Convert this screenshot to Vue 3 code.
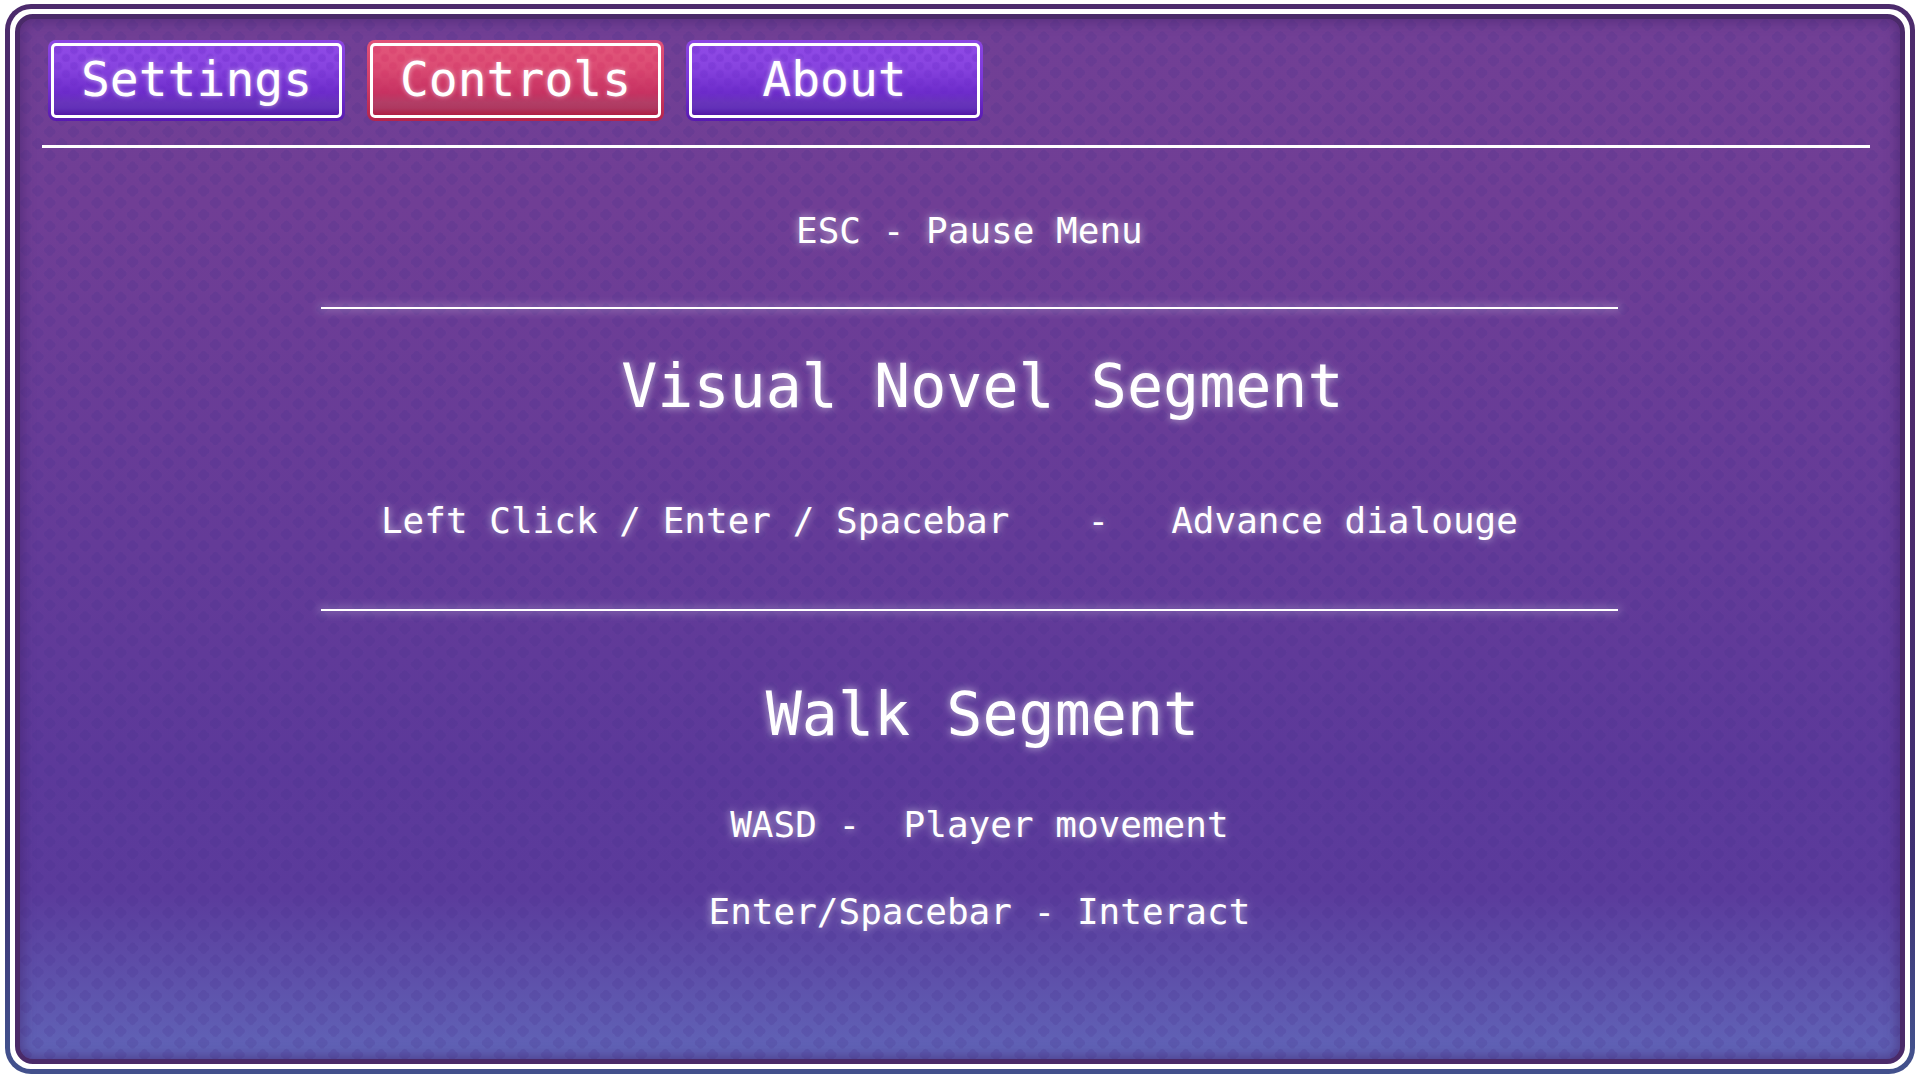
<script setup>
import { ref } from 'vue'

const tabs = ['Settings', 'Controls', 'About']
const active = ref('Controls')
</script>

<template>
  <div class="screen">
    <div class="edge">
      <div class="rim">
        <div class="panel">
          <nav class="tabs">
            <button
              v-for="tab in tabs"
              :key="tab"
              type="button"
              class="tab"
              :class="{ active: tab === active }"
              @click="active = tab"
            >
              <span class="face">{{ tab }}</span>
            </button>
          </nav>
          <hr class="divider" />
          <main class="content">
            <p class="line">ESC - Pause Menu</p>
            <hr class="rule" />
            <section class="novel">
              <h2>Visual Novel Segment</h2>
              <p class="line pair">
                <span>Left Click / Enter / Spacebar</span>
                <span class="dash">-</span>
                <span>Advance dialouge</span>
              </p>
            </section>
            <hr class="rule" />
            <section class="walk">
              <h2>Walk Segment</h2>
              <p class="line">WASD -&nbsp; Player movement</p>
              <p class="line">Enter/Spacebar - Interact</p>
            </section>
          </main>
        </div>
      </div>
    </div>
  </div>
</template>

<style>
body {
  background: #fff;
}
</style>

<style scoped>
.screen {
  box-sizing: border-box;
  display: flex;
  min-height: 100vh;
  padding: 4px 5px 6px;
  font-family: "Lucida Console", "DejaVu Sans Mono", monospace;
  color: #fff;
}

.edge,
.rim,
.panel {
  display: flex;
  flex: 1;
  min-width: 0;
}

.edge {
  padding: 5px;
  border-radius: 26px;
  background: linear-gradient(#4c2b6c 0%, #4b2a6b 45%, #3d3072 80%, #42508c 98%);
}

.rim {
  padding: 5px;
  border-radius: 21px;
  background: #fff;
}

.panel {
  flex-direction: column;
  border: 5px solid #4a2a69;
  border-radius: 18px;
  background:
    url("data:image/svg+xml,%3Csvg xmlns='http://www.w3.org/2000/svg' width='71' height='71' viewBox='0 0 6 6'%3E%3Cdefs%3E%3Cpath id='d' d='M0-.5Q.2-.5 .28-.28Q.5-.2 .5 0Q.5 .2 .28 .28Q.2 .5 0 .5Q-.2 .5-.28 .28Q-.5 .2-.5 0Q-.5-.2-.28-.28Q-.2-.5 0-.5Z'/%3E%3C/defs%3E%3Cg fill='%23402d8c' fill-opacity='.18'%3E%3Cuse href='%23d' x='.5' y='.5'/%3E%3Cuse href='%23d' x='2.5' y='.5'/%3E%3Cuse href='%23d' x='4.5' y='.5'/%3E%3Cuse href='%23d' x='1.5' y='1.5'/%3E%3Cuse href='%23d' x='3.5' y='1.5'/%3E%3Cuse href='%23d' x='5.5' y='1.5'/%3E%3Cuse href='%23d' x='.5' y='2.5'/%3E%3Cuse href='%23d' x='2.5' y='2.5'/%3E%3Cuse href='%23d' x='4.5' y='2.5'/%3E%3Cuse href='%23d' x='1.5' y='3.5'/%3E%3Cuse href='%23d' x='3.5' y='3.5'/%3E%3Cuse href='%23d' x='5.5' y='3.5'/%3E%3Cuse href='%23d' x='.5' y='4.5'/%3E%3Cuse href='%23d' x='2.5' y='4.5'/%3E%3Cuse href='%23d' x='4.5' y='4.5'/%3E%3Cuse href='%23d' x='1.5' y='5.5'/%3E%3Cuse href='%23d' x='3.5' y='5.5'/%3E%3Cuse href='%23d' x='5.5' y='5.5'/%3E%3C/g%3E%3C/svg%3E") 12px 24px / 71px 71px,
    linear-gradient(#713f95 0%, #703e95 18%, #5c399a 72%, #5b3b9c 84%, #6062b6 99%);
  box-shadow: inset 0 0 14px 1px rgba(60, 30, 100, 0.6);
}

.tabs {
  display: flex;
  gap: 22px;
  padding: 21px 28px 24px;
}

.tab {
  display: flex;
  width: 297px;
  height: 81px;
  padding: 3px;
  border: 0;
  border-radius: 8px;
  background: linear-gradient(#8c46e2, #7a36d8 50%, #581ab0);
  font: inherit;
  color: inherit;
  cursor: pointer;
}

.face {
  position: relative;
  z-index: 0;
  box-sizing: border-box;
  flex: 1;
  height: 75px;
  border: 3px solid #fff;
  border-radius: 5px;
  background: linear-gradient(#8f4ae6 0%, #8844e0 30%, #6d2ccb 68%, #6834bb 82%, #6230b8 90%, #5316a8 100%);
  font-size: 48px;
  line-height: 66px;
  text-shadow: 0 0 5px rgba(255, 255, 255, 0.6);
}

.face::before {
  content: "";
  position: absolute;
  z-index: -1;
  inset: 0;
  background:
    radial-gradient(circle at 4px 4px, rgba(80, 20, 180, 0.18) 3px, transparent 5px) 0 0 / 16px 16px,
    radial-gradient(circle at 12px 12px, rgba(80, 20, 180, 0.18) 3px, transparent 5px) 0 0 / 16px 16px;
  mask-image: linear-gradient(#000 20%, transparent 85%);
}

.tab.active {
  background: linear-gradient(#e05278, #d23e6a 50%, #b4244c);
}

.tab.active .face {
  background: linear-gradient(#e2557a 0%, #dc4c74 30%, #c73262 68%, #b23e66 82%, #ae3860 90%, #b01e44 100%);
}

.tab.active .face::before {
  background:
    radial-gradient(circle at 4px 4px, rgba(200, 30, 90, 0.18) 3px, transparent 5px) 0 0 / 16px 16px,
    radial-gradient(circle at 12px 12px, rgba(200, 30, 90, 0.18) 3px, transparent 5px) 0 0 / 16px 16px;
}

.divider {
  align-self: stretch;
  height: 3px;
  margin: 0 30px 0 22px;
  border: 0;
  background: #fff;
}

.content {
  padding: 61px 15% 0 16%;
  text-align: center;
}

.line,
h2 {
  margin: 0;
  font-weight: 400;
  white-space: nowrap;
  text-shadow: 0 0 8px rgba(255, 255, 255, 0.7);
}

.line {
  font-size: 36px;
  line-height: 44px;
}

h2 {
  padding-left: 26px;
  font-size: 60px;
  line-height: 72px;
}

.rule {
  height: 2px;
  margin: 54px 0 41px;
  border: 0;
  background: #fff;
  box-shadow: 0 0 9px 3px rgba(255, 255, 255, 0.2);
}

.pair {
  display: flex;
  justify-content: center;
  margin: 77px 0 66px;
  padding-right: 40px;
}

.dash {
  margin: 0 62px 0 78px;
}

.walk {
  padding-top: 26px;
}

.walk .line {
  margin-top: 43px;
  padding-left: 20px;
}

.walk h2 + .line {
  margin-top: 53px;
}
</style>
